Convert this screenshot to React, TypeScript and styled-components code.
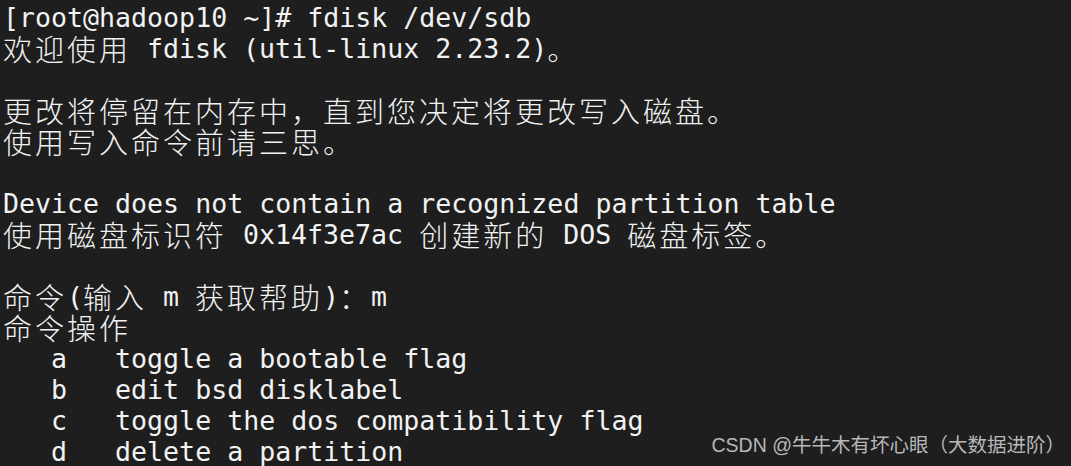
import React from "react";
import styled, { createGlobalStyle } from "styled-components";

const Global = createGlobalStyle`
  html, body { margin: 0; padding: 0; background: #1e1e1e; }
  #root { width: 1071px; height: 466px; }
`;

const Screen = styled.div`
  position: relative;
  width: 1071px;
  height: 466px;
  overflow: hidden;
  background: #1e1e1e;
  box-sizing: border-box;
  padding: 2px 0 0 3px;
`;

const Terminal = styled.pre`
  margin: 0;
  font-family: "DejaVu Sans Mono", monospace;
  font-size: 26.6px;
  line-height: 31px;
  color: #f2f2f2;
  white-space: pre;
`;

const Line = styled.div`
  height: 31px;
  white-space: pre;
`;

const Wide = styled.span`
  display: inline-block;
  width: 32px;
  font-family: "Noto Sans CJK SC", sans-serif;
  font-size: 29px;
  line-height: 31px;
  vertical-align: top;
  text-align: left;
  font-weight: 300;
`;

const Watermark = styled.div`
  position: absolute;
  right: 6px;
  bottom: 9px;
  font-family: "Liberation Sans", "Noto Sans CJK SC", sans-serif;
  font-size: 19.5px;
  line-height: 24px;
  color: #b8b8b8;
  white-space: nowrap;
`;

const isWide = (ch: string) => /[\u3000-\u9fff\uff00-\uffef]/.test(ch);

function TermLine({ text }: { text: string }) {
  const parts: React.ReactNode[] = [];
  let buf = "";
  let k = 0;
  for (const ch of text) {
    if (isWide(ch)) {
      if (buf) {
        parts.push(buf);
        buf = "";
      }
      parts.push(<Wide key={k++}>{ch}</Wide>);
    } else {
      buf += ch;
    }
  }
  if (buf) parts.push(buf);
  return <Line>{parts.length ? parts : " "}</Line>;
}

const lines = [
  "[root@hadoop10 ~]# fdisk /dev/sdb",
  "欢迎使用 fdisk (util-linux 2.23.2)。",
  "",
  "更改将停留在内存中，直到您决定将更改写入磁盘。",
  "使用写入命令前请三思。",
  "",
  "Device does not contain a recognized partition table",
  "使用磁盘标识符 0x14f3e7ac 创建新的 DOS 磁盘标签。",
  "",
  "命令(输入 m 获取帮助)：m",
  "命令操作",
  "   a   toggle a bootable flag",
  "   b   edit bsd disklabel",
  "   c   toggle the dos compatibility flag",
  "   d   delete a partition",
];

export default function App() {
  return (
    <>
      <Global />
      <Screen>
        <Terminal>
          {lines.map((l, i) => (
            <TermLine key={i} text={l} />
          ))}
        </Terminal>
        <Watermark>CSDN @牛牛木有坏心眼（大数据进阶）</Watermark>
      </Screen>
    </>
  );
}
